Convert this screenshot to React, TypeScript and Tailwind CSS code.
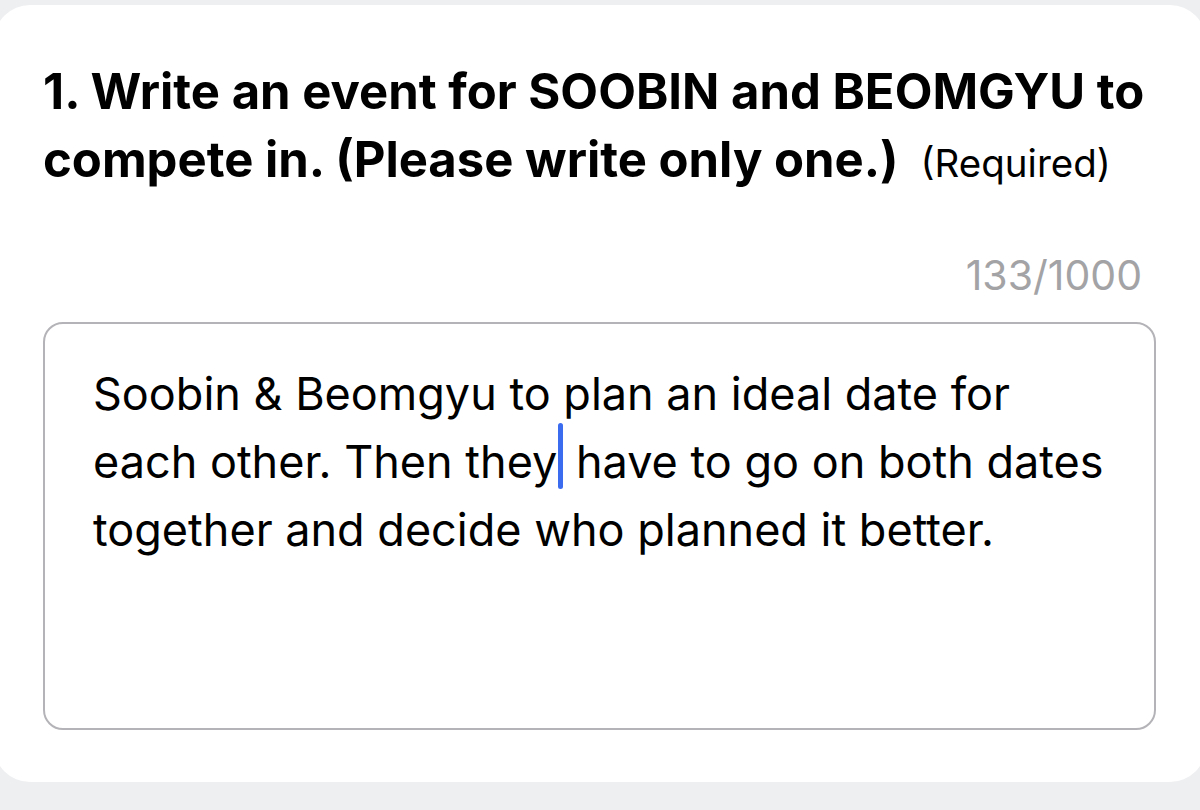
export default function App() {
  return (
    <main
      className="w-[1200px] h-[810px] bg-[#eeeff1] overflow-hidden pt-[5px]"
      style={{ fontFamily: "Inter, 'Liberation Sans', sans-serif" }}
    >
      <div className="-mx-[6px] h-[777px] bg-white rounded-[36px] pl-[49px] pr-[50px] pt-[53px]">
        <h1 className="text-[49px] leading-[68px] font-bold text-black">
          <span className="block whitespace-nowrap">1. Write an event for SOOBIN and BEOMGYU to</span>
          <span className="block whitespace-nowrap">
            compete in. (Please write only one.)
            <span className="ml-[22px] text-[38.5px] leading-none font-normal">(Required)</span>
          </span>
        </h1>

        <div className="mt-[57px] text-right pr-[14px] text-[41px] text-[#a3a3a6] leading-[48px]">
          133/1000
        </div>

        <div className="mt-[23px] h-[408px] w-[1113px] border-2 border-[#b4b4b8] rounded-[20px] pl-[48px] pt-[36px] text-[45px] leading-[68px] text-black">
          <div className="whitespace-nowrap">Soobin &amp; Beomgyu to plan an ideal date for</div>
          <div className="whitespace-nowrap">
            each other. Then they
            <span className="relative -top-[5px] inline-block align-top w-[5px] h-[66px] rounded-full bg-[#3b6cf0] ml-[1px]" />{" "}
            have to go on both dates
          </div>
          <div className="whitespace-nowrap">together and decide who planned it better.</div>
        </div>
      </div>
    </main>
  );
}
